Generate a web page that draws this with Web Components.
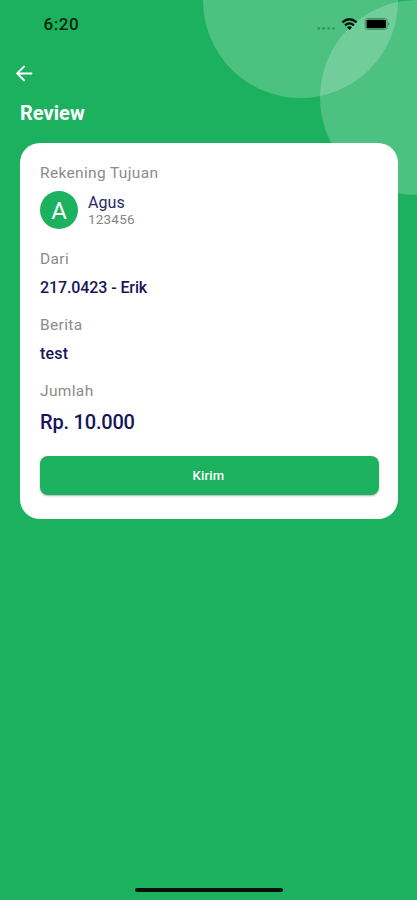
<!DOCTYPE html>
<html lang="id">
<head>
<meta charset="utf-8">
<meta name="viewport" content="width=device-width">
<title>Review</title>
<style>
html,body{margin:0;height:100%;background:#1cb15f}
body{font-family:Roboto,"Liberation Sans",sans-serif;overflow:hidden}
</style>
</head>
<body>
<review-screen></review-screen>
<script>
const define = (name, html) => customElements.define(name, class extends HTMLElement {
  constructor() {
    super();
    const t = document.createElement('template');
    t.innerHTML = html;
    this.attachShadow({mode: 'open'}).append(t.content.cloneNode(true));
  }
});

define('corner-circles', `<style>
:host{position:absolute;inset:0;overflow:hidden;pointer-events:none}
i{position:absolute;width:195px;height:195px;border-radius:50%;background:rgba(255,255,255,.21)}
.a{left:203px;top:-97.5px}.b{left:320px;top:0}
</style><i class="a"></i><i class="b"></i>`);

define('status-bar', `<style>
:host{display:flex;height:48px;box-sizing:border-box;padding:0 26px 0 43.5px;align-items:center;justify-content:space-between;position:relative;color:#04260f}
.time{font-size:17px;font-weight:500;letter-spacing:.6px}
svg{display:block}
</style><span class="time">6:20</span>
<svg width="76" height="18" viewBox="315 15 76 18">
<g fill="#379463"><circle cx="318.8" cy="28.3" r="1.4"/><circle cx="323.6" cy="28.3" r="1.4"/><circle cx="328.5" cy="28.3" r="1.4"/><circle cx="333.4" cy="28.3" r="1.4"/></g>
<g fill="none" stroke="#06110a" stroke-width="2.3"><path d="M342.4 22.4Q349.4 16.2 356.6 22.4"/><path d="M345 25.3Q349.4 21.5 354 25.3"/></g>
<path d="M346.9 27.2Q349.5 25.2 352.1 27.2L349.5 30Z" fill="#06110a"/>
<rect x="365.2" y="18.5" width="22" height="10.9" rx="2.6" fill="none" stroke="#3f8e62" stroke-width="1"/>
<rect x="366.5" y="19.8" width="19.4" height="8.4" rx="1" fill="#000"/>
<path d="M388.5 22.2Q390.5 24 388.5 25.8Z" fill="#35724f"/>
</svg>`);

define('back-button', `<style>
:host{display:block;padding:17px 0 0 15px;height:17px}
svg{display:block}
</style><svg width="18" height="17" viewBox="0 0 18 17" fill="none" stroke="#fff" stroke-width="2" stroke-linecap="round" stroke-linejoin="round"><path d="M16.4 8.4H2.3M9 1.6L2.1 8.4L9 15.2"/></svg>`);

define('page-title', `<style>
:host{display:block;position:relative;padding:18px 20px 0;height:43px;font-size:20px;line-height:26px;font-weight:700;letter-spacing:.05px;color:#fff}
</style><slot></slot>`);

define('review-card', `<style>
:host{display:block;position:relative;box-sizing:border-box;width:378px;height:376px;margin-left:20px;padding:20px 20px 0;border-radius:20px;background:#fff}
</style><slot></slot>`);

define('detail-field', `<style>
:host{display:block;height:66px;white-space:nowrap}
.l{font-size:15.5px;line-height:20px;color:#8b8b8b;letter-spacing:.35px}
.v{margin-top:var(--gap,9px);font-size:var(--size,16px);line-height:19px;font-weight:500;color:#17145a;letter-spacing:var(--vs,.2px)}
</style><div class="l"><slot name="label"></slot></div><div class="v"><slot></slot></div>`);

define('recipient-row', `<style>
:host{display:flex;align-items:center;gap:10px;height:38px;margin:8px 0 20px}
.av{display:grid;place-items:center;width:38px;height:38px;border-radius:50%;background:#1cb15f;color:#fff;font-size:24px;line-height:40px}
.n{font-size:16px;line-height:19px;color:#29265f;letter-spacing:.1px}
.a{font-size:13.5px;line-height:15px;color:#858585;letter-spacing:.2px}
</style><div class="av"><slot name="initial"></slot></div><div><div class="n"><slot name="name"></slot></div><div class="a"><slot name="account"></slot></div></div>`);

define('primary-button', `<style>
:host{display:block;margin-top:9px}
button{display:block;width:339px;height:39px;padding:0;border:0;border-radius:8px;background:#1cb15f;color:#fff;font:500 13px/39px Roboto,sans-serif;letter-spacing:.2px;text-indent:-2px;box-shadow:0 1px 2px rgba(0,0,0,.32)}
</style><button><slot></slot></button>`);

define('home-indicator', `<style>
:host{display:block;width:148px;height:4px;border-radius:2px;background:#08120c;margin:auto auto 8px;}
</style>`);

define('review-screen', `<style>
:host{display:flex;flex-direction:column;position:relative;width:417px;height:900px;background:#1cb15f;overflow:hidden}
.label{font-size:15.5px;line-height:20px;color:#8b8b8b;letter-spacing:.35px}
</style>
<corner-circles></corner-circles>
<status-bar></status-bar>
<back-button></back-button>
<page-title>Review</page-title>
<review-card>
<div class="label">Rekening Tujuan</div>
<recipient-row><span slot="initial">A</span><span slot="name">Agus</span><span slot="account">123456</span></recipient-row>
<detail-field style="--vs:-.1px"><span slot="label">Dari</span>217.0423 - Erik</detail-field>
<detail-field><span slot="label">Berita</span>test</detail-field>
<detail-field style="--size:20px;--vs:-.2px;--gap:12px"><span slot="label">Jumlah</span>Rp. 10.000</detail-field>
<primary-button>Kirim</primary-button>
</review-card>
<home-indicator></home-indicator>`);
</script>
</body>
</html>
